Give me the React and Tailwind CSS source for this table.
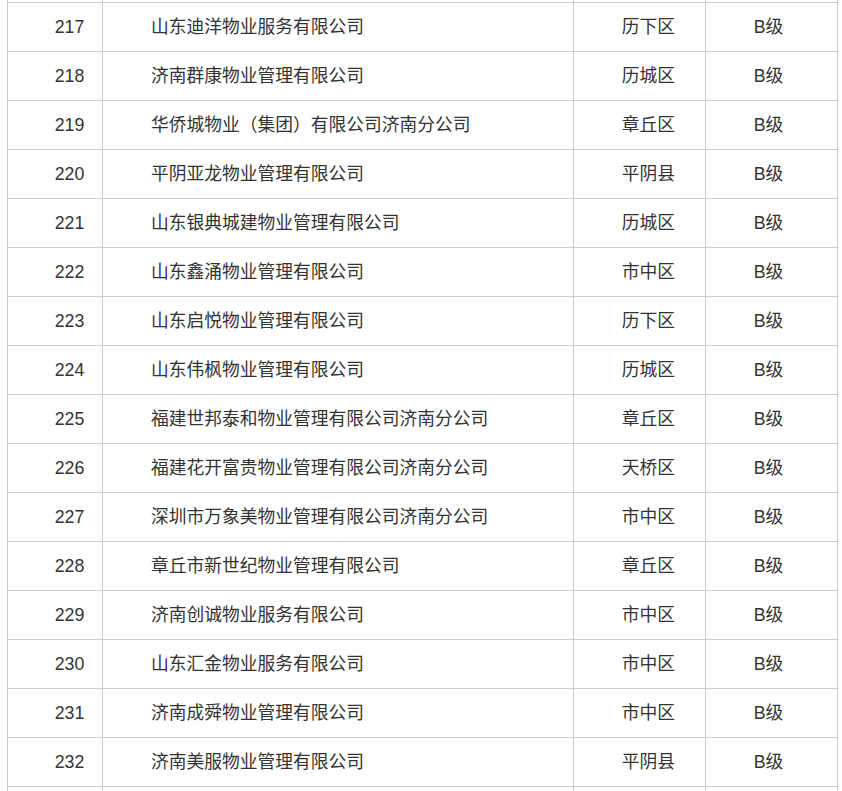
import React from 'react';

const rows = [
  ['217', '山东迪洋物业服务有限公司', '历下区'],
  ['218', '济南群康物业管理有限公司', '历城区'],
  ['219', '华侨城物业（集团）有限公司济南分公司', '章丘区'],
  ['220', '平阴亚龙物业管理有限公司', '平阴县'],
  ['221', '山东银典城建物业管理有限公司', '历城区'],
  ['222', '山东鑫涌物业管理有限公司', '市中区'],
  ['223', '山东启悦物业管理有限公司', '历下区'],
  ['224', '山东伟枫物业管理有限公司', '历城区'],
  ['225', '福建世邦泰和物业管理有限公司济南分公司', '章丘区'],
  ['226', '福建花开富贵物业管理有限公司济南分公司', '天桥区'],
  ['227', '深圳市万象美物业管理有限公司济南分公司', '市中区'],
  ['228', '章丘市新世纪物业管理有限公司', '章丘区'],
  ['229', '济南创诚物业服务有限公司', '市中区'],
  ['230', '山东汇金物业服务有限公司', '市中区'],
  ['231', '济南成舜物业管理有限公司', '市中区'],
  ['232', '济南美服物业管理有限公司', '平阴县'],
];

const Row = ({ no, name, area, grade, h = 'h-[49px]', top = true }) => (
  <div className={`flex ${h} ${top ? 'border-t border-[#ccc]' : ''}`}>
    <div className="w-[95px] border-l border-[#ccc] flex items-center justify-center pl-[29px]">{no}</div>
    <div className="w-[471px] border-l border-[#ccc] flex items-center pl-[48px]">{name}</div>
    <div className="w-[132px] border-l border-[#ccc] flex items-center justify-center pl-[18px]">{area}</div>
    <div className="w-[133px] border-l border-r border-[#ccc] flex items-center justify-center pr-[6px]">{grade}</div>
  </div>
);

export default function App() {
  return (
    <div className="bg-white w-[842px] h-[791px] overflow-hidden">
      <div
        className="ml-[7px] w-[831px] text-[17.75px] text-[#333]"
        style={{ fontFamily: '"Liberation Sans", "Noto Sans CJK SC", sans-serif' }}
      >
        {/* sliver of the row above */}
        <Row h="h-[2px]" top={false} />
        {rows.map(([no, name, area]) => (
          <Row key={no} no={no} name={name} area={area} grade="B级" />
        ))}
        <Row h="h-[20px]" />
      </div>
    </div>
  );
}
